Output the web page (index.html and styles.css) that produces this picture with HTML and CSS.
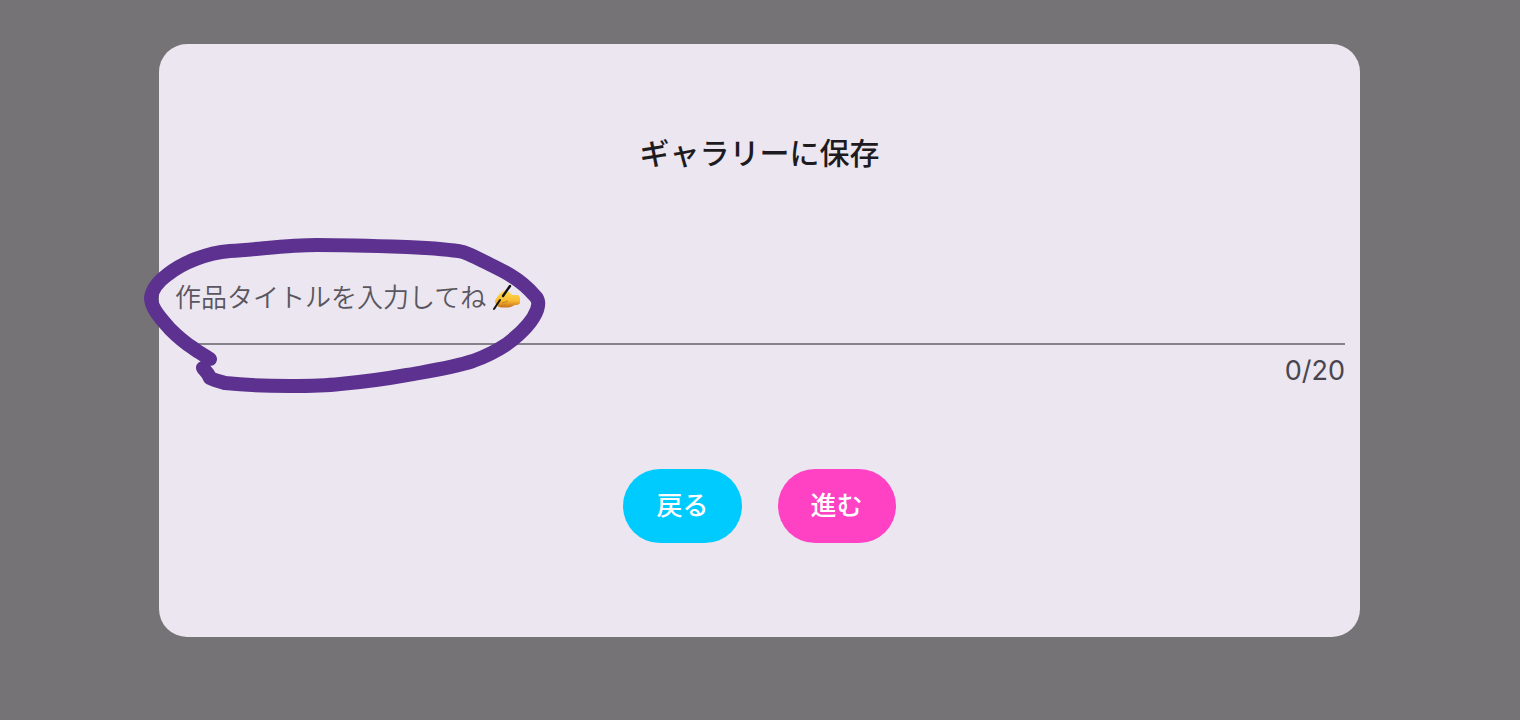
FILE: index.html
```html
<!DOCTYPE html>
<html lang="ja">
<head>
<meta charset="utf-8">
<meta name="viewport" content="width=device-width, initial-scale=1">
<title>ギャラリーに保存</title>
<link rel="stylesheet" href="styles.css">
</head>
<body>
<main class="backdrop">
  <form class="dialog" role="dialog" aria-labelledby="dialog-title">
    <h1 class="title" id="dialog-title">ギャラリーに保存</h1>
    <div class="field">
      <input class="input" type="text" maxlength="20" aria-labelledby="dialog-title" aria-describedby="count" placeholder="作品タイトルを入力してね">
      <svg class="hand" viewBox="0 0 28 28" aria-hidden="true">
        <defs>
          <linearGradient id="skin" x1="0" y1="0" x2="0" y2="1">
            <stop offset="0" stop-color="#ffdb50"/>
            <stop offset=".6" stop-color="#f8bb32"/>
            <stop offset="1" stop-color="#c9701c"/>
          </linearGradient>
        </defs>
        <path d="M2 18C3 15 7 10 10 8C13 7 17 9 19 12L25 12Q27 13 27 16V20Q26 22 22 22L18 24Q12 25 6 24Q4 23 5 22L3 21Q2 20 2 18Z" fill="url(#skin)"/>
        <path d="M9 20L15 18M7 23L13 22" fill="none" stroke="#c9821f" stroke-width="1"/>
        <path d="M1 26L7 17" stroke="#111" stroke-width="2" stroke-linecap="round"/>
        <path d="M10 13L17 3" stroke="#111" stroke-width="2.4" stroke-linecap="round"/>
      </svg>
      <svg class="mark" viewBox="0 0 404 158" aria-hidden="true">
        <path d="M68 122C62 118 56 115 51 111C43 106 35 99 28 92C19 82 9 71 9 61C10 52 17 44 25 38C41 25 65 16 88 14C120 12 146 8 175 8C205 8 235 9 265 10C287 11 307 12 321 15C328 17 334 21 341 24C351 29 360 33 368 38C378 44 387 52 393 59C398 64 396 69 395 73C391 84 381 95 365 107C353 115 342 120 331 124C310 131 287 134 265 138C243 142 220 145 198 147C181 149 164 149 148 149C125 149 102 148 83 146C77 144 72 143 68 141L66 137L61 131"/>
      </svg>
    </div>
    <output class="count" id="count">0/20</output>
    <div class="actions">
      <button class="button back" type="button">戻る</button>
      <button class="button next" type="button">進む</button>
    </div>
  </form>
</main>
</body>
</html>
```
FILE: styles.css
```css
* {
  box-sizing: border-box;
}

body {
  margin: 0;
  font-family: "Noto Sans CJK JP", sans-serif;
  color: #1d1b20;
}

.backdrop {
  min-height: 100vh;
  padding: 44px 160px 82px 159px;
  background: #757376;
}

.dialog {
  display: flex;
  flex-direction: column;
  padding: 85px 15px 94px;
  border-radius: 28px;
  background: #ebe6f0;
}

.title {
  margin: 0;
  font-size: 30px;
  line-height: 44px;
  font-weight: 500;
  text-align: center;
}

.field {
  position: relative;
  margin-top: 79px;
}

.input {
  display: block;
  width: 100%;
  height: 93px;
  padding: 0 1px 6px;
  border: 0;
  outline: 0;
  background: linear-gradient(#85828a, #85828a) right bottom / calc(100% - 16px) 2px no-repeat;
  font-family: inherit;
  font-size: 26px;
  font-weight: 350;
  color: #49454f;
}

.input::placeholder {
  color: #5a565f;
  opacity: 1;
}

.hand {
  position: absolute;
  left: 319px;
  top: 31px;
  width: 28px;
  height: 28px;
}

.mark {
  position: absolute;
  left: -32px;
  top: -15px;
  width: 404px;
  height: 158px;
  fill: none;
  stroke: #5c318f;
  stroke-width: 14;
  stroke-linecap: round;
  stroke-linejoin: round;
  pointer-events: none;
}

.count {
  margin-top: 8px;
  font-family: Inter, sans-serif;
  font-size: 27px;
  line-height: 36px;
  text-align: right;
  color: #49454f;
}

.actions {
  display: flex;
  justify-content: center;
  gap: 36px;
  margin-top: 80px;
}

.button {
  height: 74px;
  padding: 0 33px 5px;
  border: 0;
  border-radius: 37px;
  font-family: inherit;
  font-size: 26px;
  font-weight: 500;
  color: #fff;
}

.back {
  background: #00cbff;
}

.next {
  background: #ff42c3;
}
```
